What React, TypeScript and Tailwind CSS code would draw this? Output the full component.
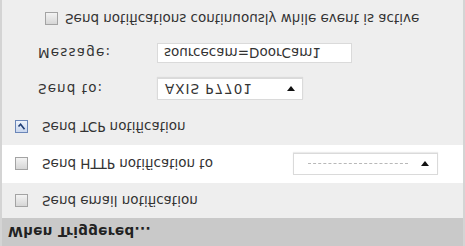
import React from 'react';

function Checkbox({ checked = false }: { checked?: boolean }) {
  if (checked) {
    return (
      <span className="flex h-[13px] w-[13px] shrink-0 items-center justify-center border border-[#6b86b8] bg-linear-to-b from-[#c9d7ee] to-[#eef3fb]">
        <svg viewBox="0 0 9 9" className="h-[9px] w-[9px]">
          <path d="M1.5 4.5 L3.6 6.8 L7.5 1.8" fill="none" stroke="#1f3d75" strokeWidth="1.6" />
        </svg>
      </span>
    );
  }
  return (
    <span className="h-[13px] w-[13px] shrink-0 border border-[#a3a3a3] bg-linear-to-b from-[#d6d6d6] to-[#f3f3f3]" />
  );
}

function Arrow() {
  return (
    <svg viewBox="0 0 8 5" className="h-[5px] w-[8px]">
      <path d="M0 0 L8 0 L4 5 Z" fill="#111" />
    </svg>
  );
}

export default function App() {
  return (
    <div className="h-[246px] w-[465px] overflow-hidden -scale-y-100">
      <div className="h-full w-full border-x-2 border-[#d4d4d4] bg-[#eeeeee] font-['DejaVu_Sans',sans-serif] text-[13.5px] text-[#333]">
        {/* header */}
        <div className="flex h-[28px] items-center bg-[#c9c9c9] pl-[6px] font-bold tracking-[0.4px] text-[#222]">
          When Triggered...
        </div>

        {/* email */}
        <div className="flex h-[35px] items-center gap-[14px] pl-[13px]">
          <Checkbox />
          <span>Send email notification</span>
        </div>

        {/* http */}
        <div className="flex h-[38px] items-center bg-white pl-[13px]">
          <Checkbox />
          <span className="ml-[14px]">Send HTTP notification to</span>
          <div className="ml-auto mr-[25px] flex h-[22px] w-[145px] items-center justify-between border border-[#dadada] bg-white pl-[14px] pr-[8px] shadow-[0_1px_1px_rgba(0,0,0,0.08)]">
            <span className="w-[100px] border-t border-dashed border-[#b8b8b8]" />
            <Arrow />
          </div>
        </div>

        {/* tcp */}
        <div className="flex h-[37px] items-center gap-[14px] pl-[13px]">
          <Checkbox checked />
          <span>Send TCP notification</span>
        </div>

        <div className="mt-[8px] flex items-center">
          <span className="w-[155px] pl-[36px] tracking-[1.1px]">Send to:</span>
          <div className="flex h-[22px] w-[146px] items-center justify-between border border-[#dadada] bg-white pl-[7px] pr-[7px] shadow-[0_1px_1px_rgba(0,0,0,0.08)]">
            <span className="tracking-[1px]">AXIS P7701</span>
            <Arrow />
          </div>
        </div>

        <div className="mt-[15px] flex items-center">
          <span className="w-[155px] pl-[36px] tracking-[1.2px]">Message:</span>
          <div className="flex h-[20px] w-[195px] items-center border border-[#dadada] bg-white pl-[6px]">
            sourcecam=DoorCam1
          </div>
        </div>

        <div className="mt-[14px] flex items-center gap-[7px] pl-[43px]">
          <Checkbox />
          <span>Send notifications continuously while event is active</span>
        </div>
      </div>
    </div>
  );
}
